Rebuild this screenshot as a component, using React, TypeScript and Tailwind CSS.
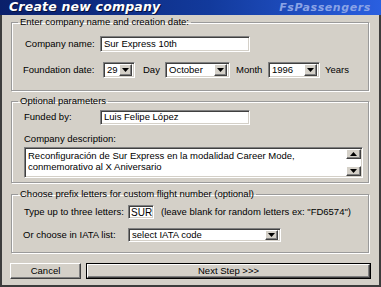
import React from "react";

const sunken =
  "bg-white border border-t-[#808080] border-l-[#808080] border-r-white border-b-white shadow-[inset_1px_1px_0_#404040,inset_-1px_-1px_0_#d4d0c8]";
const raisedBtn =
  "bg-[#d4d0c8] border border-t-white border-l-white border-r-[#404040] border-b-[#404040] shadow-[inset_-1px_-1px_0_#808080]";

function Arrow({ up = false }: { up?: boolean }) {
  return (
    <svg width="7" height="4" viewBox="0 0 7 4">
      {up ? <path d="M0 4 L3.5 0 L7 4 Z" fill="#000" /> : <path d="M0 0 L7 0 L3.5 4 Z" fill="#000" />}
    </svg>
  );
}

function Select({ value, w, h = 16 }: { value: string; w: string; h?: number }) {
  return (
    <div className={`${sunken} ${w} flex items-center justify-between pl-[3px] pr-[2px]`} style={{ height: h }}>
      <span className="leading-none">{value}</span>
      <div className={`${raisedBtn} w-[13px] flex items-center justify-center`} style={{ height: h - 4 }}>
        <Arrow />
      </div>
    </div>
  );
}

function Group({ title, h, mt, children }: { title: string; h: string; mt: string; children: React.ReactNode }) {
  return (
    <fieldset className={`border border-[#9a9a9a] shadow-[1px_1px_0_#ffffff,inset_1px_1px_0_#ffffff] ${h} ${mt} w-[358px] m-0 p-0`}>
      <legend className="ml-[6px] px-[2px] leading-[12px] h-[12px]">{title}</legend>
      {children}
    </fieldset>
  );
}

export default function App() {
  return (
    <div className="w-[381px] h-[287px] bg-[#d4d0c8] flex flex-col font-['Liberation_Sans',Arial,sans-serif] text-[9.5px] text-black overflow-hidden">
      <div className="h-[15px] flex items-center justify-between pl-[9px] pr-[10px] bg-[linear-gradient(to_right,#0a1f6a,#123a9c_55%,#2a5fe0)]">
        <span className="font-['DejaVu_Sans',sans-serif] font-bold italic text-[12.5px] leading-none text-white tracking-[0.2px] [text-shadow:1px_1px_0_#06103a]">
          Create new company
        </span>
        <span className="font-['DejaVu_Sans',sans-serif] font-bold italic text-[11px] leading-none text-[#8aa3e6] tracking-[0.6px]">
          FsPassengers
        </span>
      </div>
      <div className="flex-1 flex flex-col border-l-2 border-r-2 border-b-2 border-[#3c3c3c] pl-[9px] pt-[1px]">
        <Group title="Enter company name and creation date:" h="h-[75px]" mt="mt-0">
          <div className="flex flex-col pt-[8px]">
            <div className="flex items-center pl-[13px] h-[16px]">
              <span className="w-[75px]">Company name:</span>
              <div className={`${sunken} w-[150px] h-[16px] flex items-center pl-[3px]`}>Sur Express 10th</div>
            </div>
            <div className="flex items-center pl-[11px] h-[16px] mt-[10px]">
              <span className="w-[80px]">Foundation date:</span>
              <Select value="29" w="w-[32px]" />
              <span className="ml-[8px] w-[22px]">Day</span>
              <Select value="October" w="w-[65px]" />
              <span className="ml-[6px] w-[32px]">Month</span>
              <Select value="1996" w="w-[52px]" />
              <span className="ml-[5px]">Years</span>
            </div>
          </div>
        </Group>
        <Group title="Optional parameters" h="h-[88px]" mt="mt-[4px]">
          <div className="flex flex-col pt-[3px] pl-[12px]">
            <div className="flex items-center h-[15px]">
              <span className="w-[76px]">Funded by:</span>
              <div className={`${sunken} w-[150px] h-[15px] flex items-center pl-[3px]`}>Luis Felipe López</div>
            </div>
            <div className="mt-[8px] leading-[12px]">Company description:</div>
            <div className={`${sunken} mt-[2px] w-[339px] h-[31px] flex justify-between`}>
              <div className="pl-[3px] pt-[2px] leading-[11px]">
                Reconfiguración de Sur Express en la modalidad Career Mode,
                <br />
                conmemorativo al X Aniversario
              </div>
              <div className="flex flex-col justify-between py-[1px] pr-[1px]">
                <div className={`${raisedBtn} w-[15px] h-[10px] flex items-center justify-center`}>
                  <Arrow up />
                </div>
                <div className={`${raisedBtn} w-[15px] h-[10px] flex items-center justify-center`}>
                  <Arrow />
                </div>
              </div>
            </div>
          </div>
        </Group>
        <Group title="Choose prefix letters for custom flight number (optional)" h="h-[65px]" mt="mt-[5px]">
          <div className="flex flex-col pt-[5px] pl-[12px]">
            <div className="flex items-center h-[14px]">
              <span className="w-[104px]">Type up to three letters:</span>
              <div className={`${sunken} w-[26px] h-[14px] flex items-center pl-[2px] text-[10px]`}>SUR</div>
              <span className="ml-[7px]">(leave blank for random letters ex: "FD6574")</span>
            </div>
            <div className="flex items-center h-[14px] mt-[9px] -ml-[1px]">
              <span className="w-[105px]">Or choose in IATA list:</span>
              <Select value="select IATA code" w="w-[153px]" h={14} />
            </div>
          </div>
        </Group>
        <div className="flex mt-[10px] -ml-[1px] gap-[5px]">
          <div className={`${raisedBtn} w-[71px] h-[16px] flex items-center justify-center`}>Cancel</div>
          <div className="w-[285px] h-[16px] border border-black">
            <div className={`${raisedBtn} w-full h-full flex items-center justify-center`}>Next Step &gt;&gt;&gt;</div>
          </div>
        </div>
      </div>
    </div>
  );
}
